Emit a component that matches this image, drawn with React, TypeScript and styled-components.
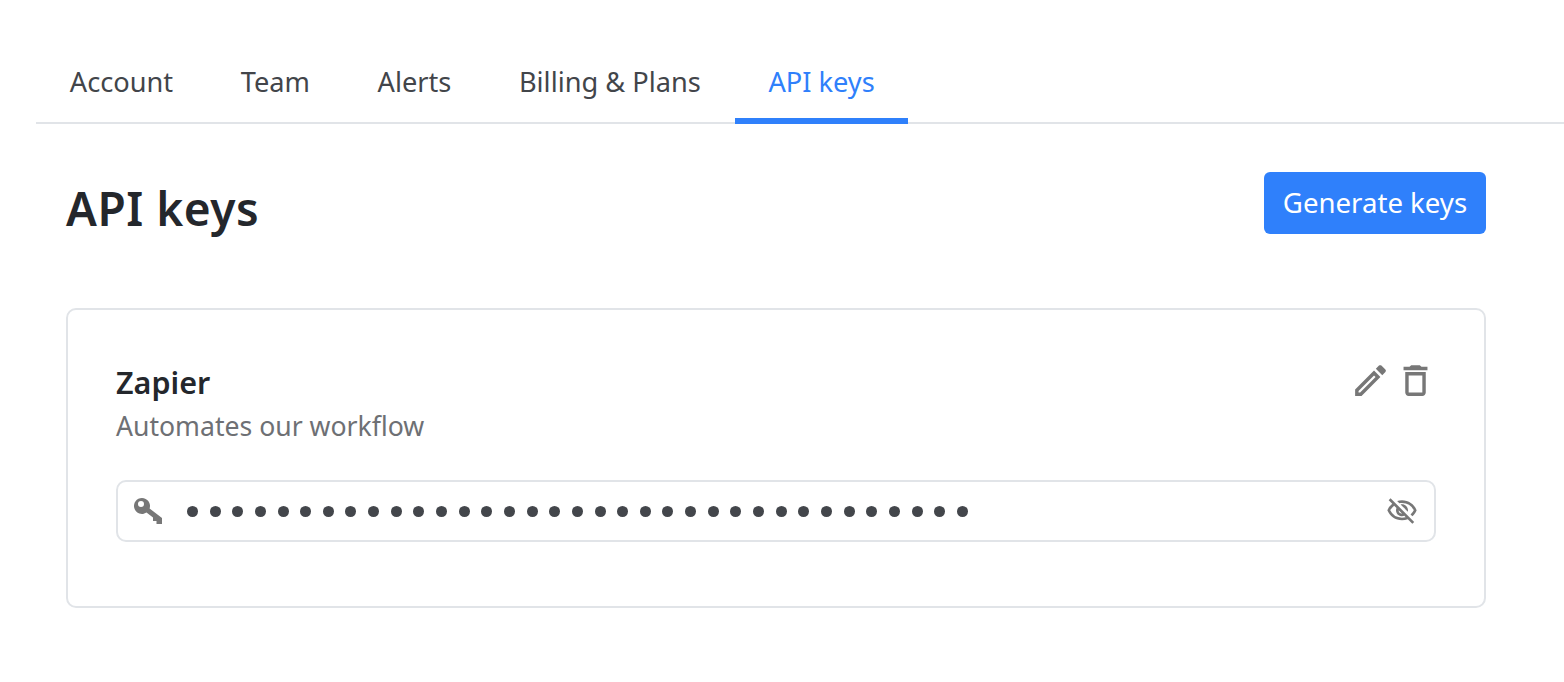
import React from 'react'
import styled, { createGlobalStyle } from 'styled-components'
import { MdOutlineEdit, MdOutlineDelete, MdOutlineVisibilityOff } from 'react-icons/md'

const GlobalStyle = createGlobalStyle`
  html, body {
    margin: 0;
    background: #fff;
    font-family: "Noto Sans", "Open Sans", sans-serif;
  }
`

const Page = styled.div`
  width: 1564px;
  height: 682px;
  padding: 44px 0 0 36px;
  box-sizing: border-box;
  overflow: hidden;
`

const Tabs = styled.nav`
  display: flex;
  height: 80px;
  box-sizing: border-box;
  border-bottom: 2px solid #e1e4e8;
`

const Tab = styled.a<{ $active?: boolean }>`
  display: flex;
  align-items: center;
  flex: none;
  height: 80px;
  padding: 0 33.8px;
  box-sizing: border-box;
  font-size: 27.2px;
  white-space: nowrap;
  color: ${({ $active }) => ($active ? '#2f80fb' : '#42454a')};
  border-bottom: 6px solid ${({ $active }) => ($active ? '#2f80fb' : 'transparent')};
`

const Content = styled.main`
  width: 1420px;
  margin: 48px 0 0 30px;
`

const Header = styled.header`
  display: flex;
  justify-content: space-between;
  align-items: flex-start;
`

const Title = styled.h1`
  margin: 6px 0 0;
  font-size: 46px;
  line-height: 60px;
  font-weight: 600;
  letter-spacing: 0.5px;
  color: #24272c;
`

const GenerateButton = styled.button`
  width: 222px;
  height: 62px;
  padding: 0 0 3px;
  border: 0;
  border-radius: 6px;
  background: #2f80fb;
  color: #fff;
  font: inherit;
  font-size: 27.6px;
`

const Card = styled.section`
  height: 300px;
  margin-top: 70px;
  padding: 50px 48px;
  box-sizing: border-box;
  border: 2px solid #e1e4e8;
  border-radius: 10px;
`

const CardHead = styled.div`
  display: flex;
  justify-content: space-between;
  align-items: flex-start;
`

const Name = styled.div`
  font-size: 30.5px;
  line-height: 44px;
  font-weight: 600;
  color: #24272c;
`

const Description = styled.div`
  margin-top: 2px;
  font-size: 26.6px;
  line-height: 40px;
  color: #6e7074;
`

const Actions = styled.div`
  display: flex;
  align-items: center;
  gap: 4px;
  color: #777;
  font-size: 41px;
  line-height: 0;
`

const KeyField = styled.div`
  display: flex;
  align-items: center;
  height: 62px;
  margin-top: 34px;
  padding: 0 16px;
  box-sizing: border-box;
  border: 2px solid #e1e4e8;
  border-radius: 10px;
  color: #777;
`

const Dots = styled.div`
  display: flex;
  flex: 1;
  gap: 11.65px;
  margin-left: 25px;
`

const Dot = styled.i`
  width: 11px;
  height: 11px;
  border-radius: 50%;
  background: #43464b;
`

const EyeOff = styled(MdOutlineVisibilityOff)`
  font-size: 32px;
`

const KeyIcon = () => (
  <svg width="28" height="26" viewBox="0 0 28 26" fill="none">
    <path
      fill="#777"
      fillRule="evenodd"
      d="M8 0a8 8 0 0 1 7.6 10.5L28 20v6h-5.5v-3H19v-3.5l-6.5-4.9A8 8 0 1 1 8 0Zm-1 3a3 3 0 1 0 0 6 3 3 0 0 0 0-6Z"
    />
  </svg>
)

export default function App() {
  return (
    <Page>
      <GlobalStyle />
      <Tabs>
        <Tab>Account</Tab>
        <Tab>Team</Tab>
        <Tab>Alerts</Tab>
        <Tab>Billing &amp; Plans</Tab>
        <Tab $active>API keys</Tab>
      </Tabs>
      <Content>
        <Header>
          <Title>API keys</Title>
          <GenerateButton>Generate keys</GenerateButton>
        </Header>
        <Card>
          <CardHead>
            <div>
              <Name>Zapier</Name>
              <Description>Automates our workflow</Description>
            </div>
            <Actions>
              <MdOutlineEdit />
              <MdOutlineDelete />
            </Actions>
          </CardHead>
          <KeyField>
            <KeyIcon />
            <Dots>
              {Array.from({ length: 35 }).map((_, i) => (
                <Dot key={i} />
              ))}
            </Dots>
            <EyeOff />
          </KeyField>
        </Card>
      </Content>
    </Page>
  )
}
